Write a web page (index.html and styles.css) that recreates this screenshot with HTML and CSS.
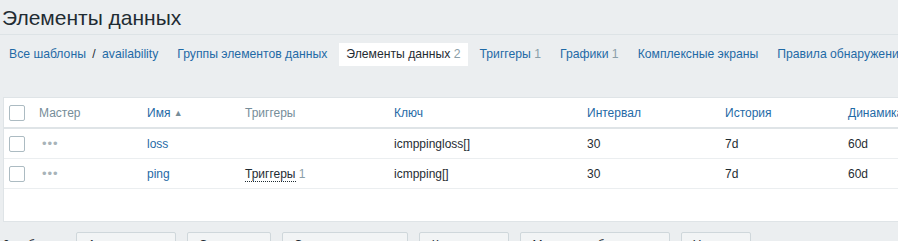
FILE: index.html
```html
<!DOCTYPE html>
<html lang="ru">
<head>
  <meta charset="UTF-8" />
  <title>Элементы данных</title>
  <link rel="stylesheet" href="styles.css">
</head>
<body>

<header class="page-header">
  <h1>Элементы данных</h1>
</header>

<nav class="tabs">
  <span class="tab crumbs"><a href="#">Все шаблоны</a> <span class="sep">/</span> <a href="#">availability</a></span>
  <a class="tab" href="#">Группы элементов данных</a>
  <span class="tab active">Элементы данных <sup>2</sup></span>
  <a class="tab" href="#">Триггеры <sup>1</sup></a>
  <a class="tab" href="#">Графики <sup>1</sup></a>
  <a class="tab" href="#">Комплексные экраны</a>
  <a class="tab" href="#">Правила обнаружения</a>
</nav>

<main class="panel">
  <table class="list">
    <colgroup>
      <col style="width:30px">
      <col style="width:108px">
      <col style="width:98px">
      <col style="width:149px">
      <col style="width:193px">
      <col style="width:138px">
      <col style="width:123px">
      <col style="width:120px">
    </colgroup>
    <thead>
      <tr>
        <th><span class="check"></span></th>
        <th class="plain">Мастер</th>
        <th><a href="#">Имя</a> <span class="arrow">&#9650;</span></th>
        <th class="plain">Триггеры</th>
        <th><a href="#">Ключ</a></th>
        <th><a href="#">Интервал</a></th>
        <th><a href="#">История</a></th>
        <th><a href="#">Динамика</a></th>
      </tr>
    </thead>
    <tbody>
      <tr>
        <td><span class="check"></span></td>
        <td class="dots">&bull;&bull;&bull;</td>
        <td><a href="#">loss</a></td>
        <td></td>
        <td>icmppingloss[]</td>
        <td>30</td>
        <td>7d</td>
        <td>60d</td>
      </tr>
      <tr>
        <td><span class="check"></span></td>
        <td class="dots">&bull;&bull;&bull;</td>
        <td><a href="#">ping</a></td>
        <td><span class="dotted">Триггеры</span> <sup>1</sup></td>
        <td>icmpping[]</td>
        <td>30</td>
        <td>7d</td>
        <td>60d</td>
      </tr>
    </tbody>
  </table>
</main>

<div class="actions">
  <span class="selected">0 выбрано</span>
  <button style="width:100px">Активировать</button>
  <button style="width:84px">Отключить</button>
  <button style="width:126px">Очистить историю</button>
  <button style="width:90px">Копировать</button>
  <button style="width:150px">Массовое обновление</button>
  <button style="width:70px">Удалить</button>
</div>

</body>
</html>
```

FILE: styles.css
```css
body {
  font-family: Arial, "Liberation Sans", sans-serif;
  font-size: 12px;
  color: #1f2c33;
  background-color: #ebeef0;
  margin: 0;
  padding: 0;
  overflow: hidden;
}
a {
  color: #1f6aa6;
  text-decoration: none;
}
sup {
  vertical-align: baseline;
  font-size: inherit;
  color: #8a9ea8;
}
.page-header {
  height: 34px;
  border-bottom: 1px solid #dde3e6;
  padding-left: 2px;
}
.page-header h1 {
  margin: 0;
  padding-top: 6px;
  font-size: 21px;
  font-weight: normal;
  line-height: 24px;
}
.tabs {
  display: flex;
  gap: 5px;
  margin-top: 8px;
  padding-left: 2px;
  white-space: nowrap;
  font-size: 12.2px;
}
.tab {
  display: block;
  padding: 0 7px;
  height: 23px;
  line-height: 23px;
}
.tab.active {
  background: white;
  color: #1f2c33;
}
.crumbs .sep {
  color: #1f2c33;
  margin: 0 3px;
}
.panel {
  margin: 31px 0 0 3px;
  width: 1100px;
  height: 123px;
  background: white;
  border: 1px solid #dfe4e7;
}
.list {
  border-collapse: collapse;
  table-layout: fixed;
  width: 959px;
}
.list th, .list td {
  text-align: left;
  white-space: nowrap;
  padding: 0 5px;
  height: 29px;
  overflow: hidden;
}
.list th {
  font-weight: normal;
  border-bottom: 2px solid #dfe4e7;
}
.list td {
  border-bottom: 1px solid #ebeef0;
}
.list th.plain {
  color: #768d99;
}
.arrow {
  font-size: 9px;
  color: #768d99;
  position: relative;
  top: -1px;
}
.check {
  display: block;
  width: 14px;
  height: 14px;
  border: 1px solid #acbbc2;
  border-radius: 2px;
  background: white;
}
.dots {
  color: #a8b3b9;
  font-size: 13px;
  letter-spacing: 1px;
  padding-left: 8px !important;
}
.dotted {
  border-bottom: 1px dotted #1f2c33;
}
.actions {
  display: flex;
  align-items: flex-start;
  gap: 11px;
  margin-top: 10px;
  padding-left: 3px;
}
.selected {
  width: 62px;
  line-height: 24px;
  color: #1f2c33;
  padding-top: 1px;
}
button {
  height: 25px;
  font-family: Arial, "Liberation Sans", sans-serif;
  font-size: 12px;
  color: #1f2c33;
  background: #f2f4f5;
  border: 1px solid #cfd7db;
  border-radius: 2px;
  padding: 0;
}
```
